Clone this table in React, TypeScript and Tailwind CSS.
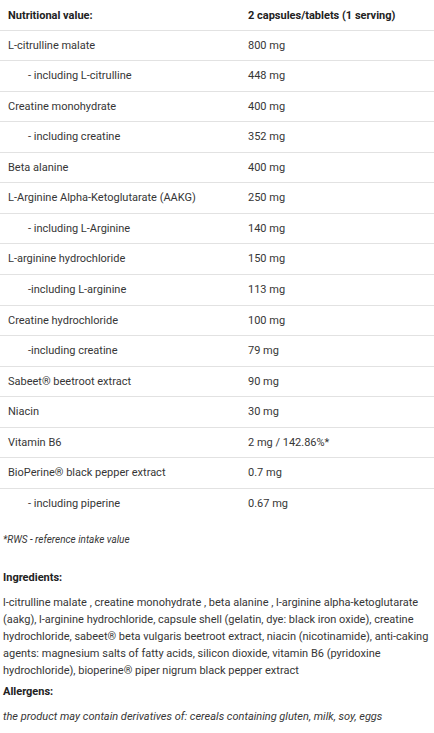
import React from "react";

const rows: { name: string; value: string; sub?: boolean }[] = [
  { name: "L-citrulline malate", value: "800 mg" },
  { name: "- including L-citrulline", value: "448 mg", sub: true },
  { name: "Creatine monohydrate", value: "400 mg" },
  { name: "- including creatine", value: "352 mg", sub: true },
  { name: "Beta alanine", value: "400 mg" },
  { name: "L-Arginine Alpha-Ketoglutarate (AAKG)", value: "250 mg" },
  { name: "- including L-Arginine", value: "140 mg", sub: true },
  { name: "L-arginine hydrochloride", value: "150 mg" },
  { name: "-including L-arginine", value: "113 mg", sub: true },
  { name: "Creatine hydrochloride", value: "100 mg" },
  { name: "-including creatine", value: "79 mg", sub: true },
  { name: "Sabeet® beetroot extract", value: "90 mg" },
  { name: "Niacin", value: "30 mg" },
  { name: "Vitamin B6", value: "2 mg / 142.86%*" },
  { name: "BioPerine® black pepper extract", value: "0.7 mg" },
  { name: "- including piperine", value: "0.67 mg", sub: true },
];

export default function App() {
  return (
    <div
      className="w-[434px] min-h-[733px] bg-white text-[#363636] text-[11px]"
      style={{ fontFamily: "Roboto, 'Liberation Sans', sans-serif" }}
    >
      <div className="flex border-b border-[#e2e2e2] pt-[9.5px] pb-[8px] leading-[12px] font-bold text-[#222]">
        <div className="w-[248px] pl-[8px]">Nutritional value:</div>
        <div className="flex-1">2 capsules/tablets (1 serving)</div>
      </div>
      {rows.map((r, i) => (
        <div
          key={i}
          className={
            "flex py-[9px] leading-[11.57px] " +
            (i < rows.length - 1 ? "border-b border-[#e2e2e2]" : "")
          }
        >
          <div className={r.sub ? "w-[248px] pl-[28px]" : "w-[248px] pl-[8px]"}>{r.name}</div>
          <div className="flex-1">{r.value}</div>
        </div>
      ))}
      <div className="px-[3px]">
        <p className="mt-[15.5px] italic text-[10px] leading-[12px]">*RWS - reference intake value</p>
        <h3 className="mt-[25px] font-bold text-[#222] leading-[14px]">Ingredients:</h3>
        <p className="mt-[9px] leading-[17px]">
          l-citrulline malate , creatine monohydrate , beta alanine , l-arginine alpha-ketoglutarate
          (aakg), l-arginine hydrochloride, capsule shell (gelatin, dye: black iron oxide), creatine
          hydrochloride, sabeet® beta vulgaris beetroot extract, niacin (nicotinamide), anti-caking
          agents: magnesium salts of fatty acids, silicon dioxide, vitamin B6 (pyridoxine
          hydrochloride), bioperine® piper nigrum black pepper extract
        </p>
        <h3 className="mt-[5.5px] font-bold text-[#222] leading-[14px]">Allergens:</h3>
        <p className="mt-[9px] italic leading-[17px]">
          the product may contain derivatives of: cereals containing gluten, milk, soy, eggs
        </p>
      </div>
    </div>
  );
}
